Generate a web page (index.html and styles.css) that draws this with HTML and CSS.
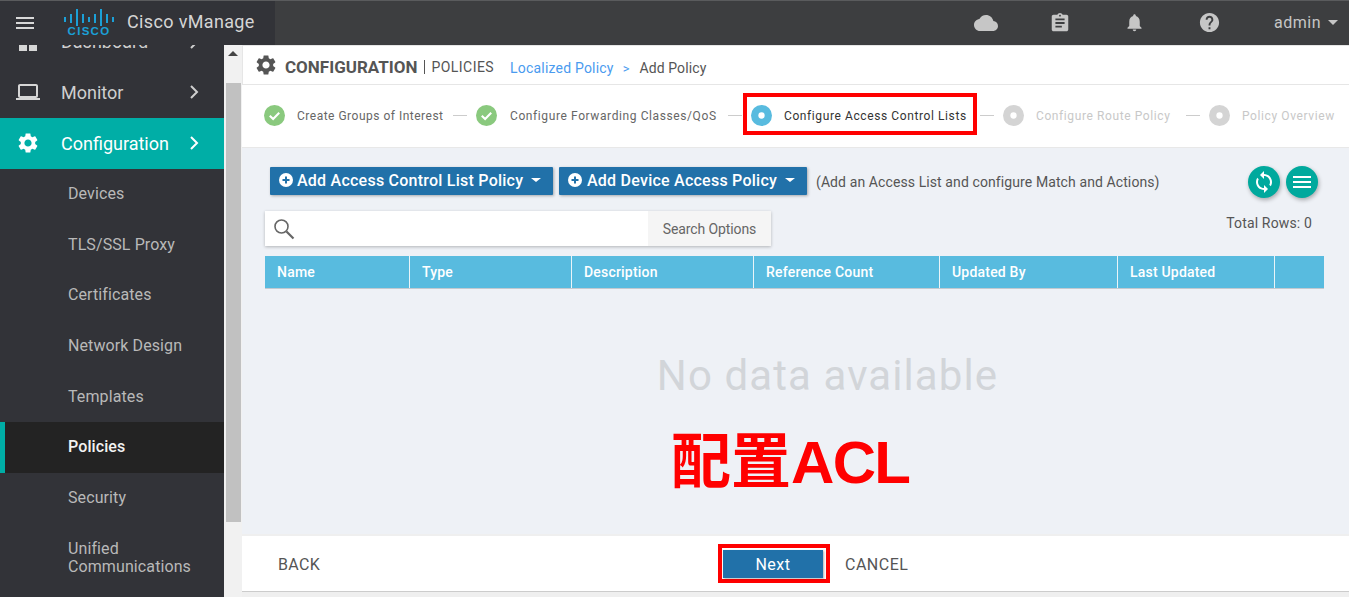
FILE: index.html
```html
<!DOCTYPE html>
<html lang="en">

<head>
    <meta charset="UTF-8">
    <title>Cisco vManage</title>
    <link rel="stylesheet" href="styles.css">
</head>

<body>
    <header class="topbar">
        <div class="brand">
            <svg class="burger" viewBox="0 0 24 24"><path d="M3 18h18v-2H3v2zm0-5h18v-2H3v2zm0-7v2h18V6H3z"/></svg>
            <div class="logo">
                <svg class="logo-bars" viewBox="0 0 50 17">
                    <rect x="0" y="8" width="2" height="5"/>
                    <rect x="6" y="5" width="2" height="9"/>
                    <rect x="12" y="0" width="2" height="17"/>
                    <rect x="18" y="5" width="2" height="9"/>
                    <rect x="24" y="8" width="2" height="5"/>
                    <rect x="30" y="5" width="2" height="9"/>
                    <rect x="36" y="0" width="2" height="17"/>
                    <rect x="42" y="5" width="2" height="9"/>
                    <rect x="48" y="8" width="2" height="5"/>
                </svg>
                <span class="logo-word">CISCO</span>
            </div>
            <span class="brand-name">Cisco vManage</span>
        </div>
        <div class="top-actions">
            <svg class="top-icon icon-cloud" viewBox="0 0 24 24"><path d="M19.35 10.04C18.67 6.59 15.64 4 12 4 9.11 4 6.6 5.64 5.35 8.04 2.34 8.36 0 10.91 0 14c0 3.31 2.69 6 6 6h13c2.76 0 5-2.24 5-5 0-2.64-2.05-4.78-4.65-4.96z"/></svg>
            <svg class="top-icon icon-task" viewBox="0 0 24 24"><path d="M19 3h-4.18C14.4 1.84 13.3 1 12 1c-1.3 0-2.4.84-2.82 2H5c-1.1 0-2 .9-2 2v14c0 1.1.9 2 2 2h14c1.1 0 2-.9 2-2V5c0-1.1-.9-2-2-2zm-7 0c.55 0 1 .45 1 1s-.45 1-1 1-1-.45-1-1 .45-1 1-1zm2 14H7v-2h7v2zm3-4H7v-2h10v2zm0-4H7V7h10v2z"/></svg>
            <svg class="top-icon icon-bell" viewBox="0 0 24 24"><path d="M12 22c1.1 0 2-.9 2-2h-4c0 1.1.89 2 2 2zm6-6v-5c0-3.07-1.64-5.64-4.5-6.32V4c0-.83-.67-1.5-1.5-1.5s-1.5.67-1.5 1.5v.68C7.63 5.36 6 7.92 6 11v5l-2 2v1h16v-1l-2-2z"/></svg>
            <svg class="top-icon icon-help" viewBox="0 0 24 24"><path d="M12 2C6.48 2 2 6.48 2 12s4.48 10 10 10 10-4.48 10-10S17.52 2 12 2zm1 17h-2v-2h2v2zm2.07-7.75l-.9.92C13.45 12.9 13 13.5 13 15h-2v-.5c0-1.1.45-2.1 1.17-2.83l1.24-1.26c.37-.36.59-.86.59-1.41 0-1.1-.9-2-2-2s-2 .9-2 2H8c0-2.21 1.79-4 4-4s4 1.79 4 4c0 .88-.36 1.68-.93 2.25z"/></svg>
            <span class="user">admin</span>
            <span class="user-caret"></span>
        </div>
    </header>

    <div class="layout">
        <nav class="sidebar">
            <a class="nav-item">
                <svg class="nav-icon" viewBox="0 0 24 24"><path d="M3 13h8V3H3v10zm0 8h8v-6H3v6zm10 0h8V11h-8v10zm0-18v6h8V3h-8z"/></svg>
                <span class="nav-label">Dashboard</span>
                <svg class="nav-arrow" viewBox="0 0 10 16"><path d="M2 2l6 6-6 6"/></svg>
            </a>
            <a class="nav-item">
                <svg class="nav-icon" viewBox="0 0 24 24"><path d="M20 18c1.1 0 1.99-.9 1.99-2L22 6c0-1.1-.9-2-2-2H4c-1.1 0-2 .9-2 2v10c0 1.1.9 2 2 2H0v2h24v-2h-4zM4 6h16v10H4V6z"/></svg>
                <span class="nav-label">Monitor</span>
                <svg class="nav-arrow" viewBox="0 0 10 16"><path d="M2 2l6 6-6 6"/></svg>
            </a>
            <a class="nav-item nav-open">
                <svg class="nav-icon" viewBox="0 0 24 24"><path d="M19.14 12.94c.04-.3.06-.61.06-.94 0-.32-.02-.64-.07-.94l2.03-1.58c.18-.14.23-.41.12-.61l-1.92-3.32c-.12-.22-.37-.29-.59-.22l-2.39.96c-.5-.38-1.03-.7-1.62-.94l-.36-2.54c-.04-.24-.24-.41-.48-.41h-3.84c-.24 0-.43.17-.47.41l-.36 2.54c-.59.24-1.13.57-1.62.94l-2.39-.96c-.22-.08-.47 0-.59.22L2.74 8.87c-.12.21-.08.47.12.61l2.03 1.58c-.05.3-.09.63-.09.94s.02.64.07.94l-2.03 1.58c-.18.14-.23.41-.12.61l1.92 3.32c.12.22.37.29.59.22l2.39-.96c.5.38 1.03.7 1.62.94l.36 2.54c.05.24.24.41.48.41h3.84c.24 0 .44-.17.47-.41l.36-2.54c.59-.24 1.13-.56 1.62-.94l2.39.96c.22.08.47 0 .59-.22l1.92-3.32c.12-.22.07-.47-.12-.61l-2.01-1.58zM12 15.6c-1.98 0-3.6-1.62-3.6-3.6s1.62-3.6 3.6-3.6 3.6 1.62 3.6 3.6-1.62 3.6-3.6 3.6z"/></svg>
                <span class="nav-label">Configuration</span>
                <svg class="nav-arrow" viewBox="0 0 10 16"><path d="M2 2l6 6-6 6"/></svg>
            </a>
            <a class="sub-item">Devices</a>
            <a class="sub-item">TLS/SSL Proxy</a>
            <a class="sub-item">Certificates</a>
            <a class="sub-item">Network Design</a>
            <a class="sub-item">Templates</a>
            <a class="sub-item sub-active">Policies</a>
            <a class="sub-item">Security</a>
            <a class="sub-item sub-two">Unified<br>Communications</a>
        </nav>

        <div class="scrollbar">
            <span class="scroll-up"></span>
            <span class="scroll-thumb"></span>
        </div>

        <main class="main">
            <div class="page-head">
                <svg class="head-gear" viewBox="0 0 24 24"><path d="M19.14 12.94c.04-.3.06-.61.06-.94 0-.32-.02-.64-.07-.94l2.03-1.58c.18-.14.23-.41.12-.61l-1.92-3.32c-.12-.22-.37-.29-.59-.22l-2.39.96c-.5-.38-1.03-.7-1.62-.94l-.36-2.54c-.04-.24-.24-.41-.48-.41h-3.84c-.24 0-.43.17-.47.41l-.36 2.54c-.59.24-1.13.57-1.62.94l-2.39-.96c-.22-.08-.47 0-.59.22L2.74 8.87c-.12.21-.08.47.12.61l2.03 1.58c-.05.3-.09.63-.09.94s.02.64.07.94l-2.03 1.58c-.18.14-.23.41-.12.61l1.92 3.32c.12.22.37.29.59.22l2.39-.96c.5.38 1.03.7 1.62.94l.36 2.54c.05.24.24.41.48.41h3.84c.24 0 .44-.17.47-.41l.36-2.54c.59-.24 1.13-.56 1.62-.94l2.39.96c.22.08.47 0 .59-.22l1.92-3.32c.12-.22.07-.47-.12-.61l-2.01-1.58zM12 15.6c-1.98 0-3.6-1.62-3.6-3.6s1.62-3.6 3.6-3.6 3.6 1.62 3.6 3.6-1.62 3.6-3.6 3.6z"/></svg>
                <span class="head-title">CONFIGURATION</span>
                <span class="head-sub">POLICIES</span>
                <a class="crumb-link">Localized Policy</a>
                <span class="crumb-sep">&gt;</span>
                <span class="crumb-here">Add Policy</span>
            </div>

            <div class="steps">
                <div class="step step-done">
                    <svg class="step-icon" viewBox="0 0 20 20"><circle cx="10" cy="10" r="10" fill="#8ac97e"/><path d="M5.5 10.2l3.2 3.2 5.8-6" fill="none" stroke="#fff" stroke-width="2"/></svg>
                    <span class="step-text step-w1">Create Groups of Interest</span>
                </div>
                <span class="step-line"></span>
                <div class="step step-done">
                    <svg class="step-icon" viewBox="0 0 20 20"><circle cx="10" cy="10" r="10" fill="#8ac97e"/><path d="M5.5 10.2l3.2 3.2 5.8-6" fill="none" stroke="#fff" stroke-width="2"/></svg>
                    <span class="step-text step-w2">Configure Forwarding Classes/QoS</span>
                </div>
                <span class="step-line"></span>
                <div class="step step-current">
                    <svg class="step-icon" viewBox="0 0 20 20"><circle cx="10" cy="10" r="10" fill="#58bbdf"/><circle cx="10" cy="10" r="3" fill="#fff"/></svg>
                    <span class="step-text step-w3">Configure Access Control Lists</span>
                </div>
                <span class="step-line"></span>
                <div class="step step-todo">
                    <svg class="step-icon" viewBox="0 0 20 20"><circle cx="10" cy="10" r="10" fill="#d4d4d4"/><circle cx="10" cy="10" r="3" fill="#fff"/></svg>
                    <span class="step-text step-w4">Configure Route Policy</span>
                </div>
                <span class="step-line"></span>
                <div class="step step-todo">
                    <svg class="step-icon" viewBox="0 0 20 20"><circle cx="10" cy="10" r="10" fill="#d4d4d4"/><circle cx="10" cy="10" r="3" fill="#fff"/></svg>
                    <span class="step-text step-w5">Policy Overview</span>
                </div>
            </div>

            <section class="content">
                <div class="toolbar">
                    <button class="add-btn add-acl">
                        <svg class="plus" viewBox="0 0 14 14"><circle cx="7" cy="7" r="7" fill="#fff"/><path d="M7 3.5v7M3.5 7h7" stroke="#2171a9" stroke-width="2"/></svg>
                        <span>Add Access Control List Policy</span>
                        <i class="caret"></i>
                    </button>
                    <button class="add-btn add-dev">
                        <svg class="plus" viewBox="0 0 14 14"><circle cx="7" cy="7" r="7" fill="#fff"/><path d="M7 3.5v7M3.5 7h7" stroke="#2171a9" stroke-width="2"/></svg>
                        <span>Add Device Access Policy</span>
                        <i class="caret"></i>
                    </button>
                    <span class="hint">(Add an Access List and configure Match and Actions)</span>
                    <div class="round-btns">
                        <button class="round-btn">
                            <svg viewBox="0 0 24 24"><path d="M12 4V1L8 5l4 4V6c3.31 0 6 2.69 6 6 0 1.01-.25 1.97-.7 2.8l1.46 1.46C19.54 15.03 20 13.57 20 12c0-4.42-3.58-8-8-8zm0 14c-3.31 0-6-2.69-6-6 0-1.01.25-1.97.7-2.8L5.24 7.74C4.46 8.97 4 10.43 4 12c0 4.42 3.58 8 8 8v3l4-4-4-4v3z"/></svg>
                        </button>
                        <button class="round-btn">
                            <svg viewBox="0 0 24 24"><path d="M3 18h18v-2H3v2zm0-5h18v-2H3v2zm0-7v2h18V6H3z"/></svg>
                        </button>
                    </div>
                </div>

                <div class="search-row">
                    <div class="search-box">
                        <svg class="search-icon" viewBox="0 0 22 22"><circle cx="8.5" cy="8.5" r="6.5" fill="none" stroke="#666" stroke-width="1.6"/><path d="M13.5 13.5l7 7" stroke="#666" stroke-width="2.2"/></svg>
                        <span class="search-opt">Search Options</span>
                    </div>
                    <span class="total">Total Rows: 0</span>
                </div>

                <div class="table-head">
                    <div class="col col-name">Name</div>
                    <div class="col col-type">Type</div>
                    <div class="col col-desc">Description</div>
                    <div class="col col-ref">Reference Count</div>
                    <div class="col col-by">Updated By</div>
                    <div class="col col-last">Last Updated</div>
                    <div class="col col-end"></div>
                </div>

                <div class="no-data">No data available</div>
                <div class="note" lang="zh-CN">配置<span class="note-latin">ACL</span></div>
            </section>

            <div class="footer">
                <a class="foot-link foot-back">BACK</a>
                <div class="next-mark"><button class="next-btn">Next</button></div>
                <a class="foot-link foot-cancel">CANCEL</a>
            </div>
        </main>
    </div>
</body>

</html>
```

FILE: styles.css
```css
* {
    box-sizing: border-box;
}

html,
body {
    height: 597px;
    margin: 0;
    overflow: hidden;
}

body {
    font-family: Roboto, "Liberation Sans", sans-serif;
    background-color: #efefef;
    color: #555;
}

/* top bar */
.topbar {
    display: flex;
    justify-content: space-between;
    height: 45px;
    background-color: #3d3e40;
    border-top: 1px solid #5a5b5d;
}

.brand {
    display: flex;
    align-items: center;
    width: 275px;
    background-color: #323338;
}

.burger {
    width: 24px;
    height: 24px;
    margin-left: 13px;
    fill: #d8d8d8;
}

.logo {
    display: flex;
    flex-direction: column;
    align-items: center;
    width: 50px;
    margin-left: 27px;
    margin-top: -1px;
}

.logo-bars {
    display: block;
    width: 50px;
    height: 17px;
    fill: #1ba0d7;
}

.logo-word {
    margin-top: 1px;
    font-family: "Liberation Sans", sans-serif;
    font-size: 11.5px;
    font-weight: 700;
    line-height: 9px;
    letter-spacing: 1.3px;
    color: #1ba0d7;
}

.brand-name {
    margin-left: 13px;
    margin-top: -3px;
    font-size: 18px;
    color: #d5d5d5;
    letter-spacing: 0.35px;
}

.top-actions {
    display: flex;
    align-items: center;
    padding-right: 11px;
    padding-bottom: 1px;
}

.top-icon {
    fill: #c6c6c6;
}

.icon-cloud {
    width: 24px;
    height: 24px;
}

.icon-task {
    width: 22px;
    height: 22px;
    margin-left: 51px;
}

.icon-bell {
    width: 21px;
    height: 21px;
    margin-left: 53px;
}

.icon-help {
    width: 23px;
    height: 23px;
    margin-left: 53px;
}

.user {
    margin-left: 53px;
    font-size: 16px;
    letter-spacing: 0.5px;
    color: #c6c6c6;
}

.user-caret {
    margin-left: 7px;
    border-left: 5px solid transparent;
    border-right: 5px solid transparent;
    border-top: 5px solid #c6c6c6;
}

/* page below the top bar */
.layout {
    display: flex;
    height: 552px;
}

.sidebar {
    flex: 0 0 224px;
    overflow: hidden;
    background-color: #323338;
}

.nav-item {
    display: flex;
    align-items: center;
    height: 50.5px;
    color: #cfcfcf;
    font-size: 18px;
}

.nav-item:first-child {
    margin-top: -28.5px;
}

.nav-icon {
    flex: none;
    width: 24px;
    height: 24px;
    margin-left: 16px;
    fill: #d6d6d6;
}

.nav-label {
    flex: 1;
    margin-left: 21px;
}

.nav-arrow {
    flex: none;
    width: 10px;
    height: 16px;
    margin-right: 25px;
    fill: none;
    stroke: #cfcfcf;
    stroke-width: 2;
}

.nav-open {
    height: 51px;
    background-color: #00aea6;
    color: #fff;
}

.nav-open .nav-icon {
    fill: #fff;
}

.nav-open .nav-arrow {
    stroke: #fff;
}

.sub-item {
    display: flex;
    align-items: center;
    height: 50.7px;
    padding-left: 68px;
    font-size: 16px;
    line-height: 18px;
    letter-spacing: 0.1px;
    color: #b9b9b9;
}

.sub-active {
    background-color: #232323;
    border-left: 5px solid #00aea6;
    padding-left: 63px;
    font-weight: 500;
    color: #f2f2f2;
}

.sub-two {
    height: 70px;
}

.scrollbar {
    flex: 0 0 18px;
    display: flex;
    flex-direction: column;
    align-items: center;
    background-color: #f1f1f1;
}

.scroll-up {
    margin-top: 6px;
    border-left: 5px solid transparent;
    border-right: 5px solid transparent;
    border-bottom: 5px solid #444;
}

.scroll-thumb {
    width: 15px;
    height: 439px;
    margin-top: 27px;
    background-color: #c1c1c1;
}

.main {
    flex: 1;
    display: flex;
    flex-direction: column;
    min-width: 0;
}

/* heading */
.page-head {
    display: flex;
    align-items: center;
    height: 40px;
    padding-left: 11px;
    background-color: #fff;
    border: 1px solid #e6e6e6;
    border-right: 0;
}

.head-gear {
    width: 24px;
    height: 24px;
    fill: #555;
}

.head-title {
    margin-left: 7px;
    margin-top: 3px;
    font-size: 17px;
    font-weight: 700;
    color: #555;
}

.head-sub {
    margin-left: 7px;
    margin-top: 3px;
    padding-left: 6px;
    border-left: 1px solid #555;
    font-size: 14px;
    line-height: 14px;
    letter-spacing: 0.45px;
    color: #555;
}

.crumb-link {
    margin-left: 16px;
    margin-top: 6px;
    font-size: 14px;
    letter-spacing: 0.2px;
    color: #4a9bef;
}

.crumb-sep {
    margin-left: 9px;
    margin-top: 6px;
    font-size: 13px;
    color: #4a9bef;
}

.crumb-here {
    margin-left: 10px;
    margin-top: 6px;
    font-size: 14px;
    letter-spacing: 0.1px;
    color: #555;
}

/* wizard steps */
.steps {
    display: flex;
    align-items: center;
    height: 63px;
    padding-left: 22px;
    padding-bottom: 1px;
    background-color: #fff;
    border-bottom: 1px solid #e8e8e8;
}

.step {
    display: flex;
    align-items: center;
    flex: none;
}

.step-icon {
    width: 21px;
    height: 21px;
    flex: none;
}

.step-text {
    margin-left: 12px;
    font-size: 12px;
    letter-spacing: 0.6px;
    white-space: nowrap;
    color: #666;
}

.step-w1 {
    width: 146px;
    letter-spacing: 0.5px;
}

.step-w2 {
    width: 208px;
    margin-left: 13px;
}

.step-w3 {
    width: 186px;
    color: #333;
}

.step-w4 {
    width: 140px;
}

.step-w5 {
    width: 95px;
}

.step-todo .step-text {
    color: #c8c8c8;
}

.step-line {
    flex: none;
    width: 14px;
    height: 1px;
    margin: 0 9px 0 10px;
    background-color: #ccc;
}

.step-current {
    position: relative;
}

/* red mark drawn over the current step */
.step-current::after {
    content: "";
    position: absolute;
    left: -8px;
    top: -12px;
    box-sizing: border-box;
    width: 234px;
    height: 42px;
    border: 4px solid #f00;
}

/* list area */
.content {
    position: relative;
    flex: 1;
    padding: 19px 25px 0 23px;
    background-color: #eef1f6;
}

.toolbar {
    display: flex;
    align-items: center;
    height: 32px;
}

.add-btn {
    display: flex;
    align-items: center;
    height: 28px;
    padding: 0 0 2px 9px;
    border: 0;
    border-radius: 1px;
    background-color: #2171a9;
    box-shadow: 1px 1px 3px rgba(0, 0, 0, 0.3);
    font-family: inherit;
    font-size: 16px;
    font-weight: 500;
    letter-spacing: 0.24px;
    color: #fff;
    margin-top: -4px;
}

.add-acl {
    width: 283px;
    margin-left: 5px;
}

.add-dev {
    width: 248px;
    margin-left: 6px;
}

.plus {
    width: 14px;
    height: 14px;
    margin-right: 4px;
    flex: none;
}

.add-dev .plus {
    margin-right: 5px;
}

.caret {
    margin-left: 8px;
    border-left: 5px solid transparent;
    border-right: 5px solid transparent;
    border-top: 4px solid #fff;
}

.hint {
    margin-left: 9px;
    margin-top: -2px;
    font-size: 14px;
    letter-spacing: 0.1px;
    color: #555;
}

.round-btns {
    display: flex;
    gap: 6px;
    margin-left: auto;
    margin-right: 6px;
    margin-top: -2px;
}

.round-btn {
    display: flex;
    align-items: center;
    justify-content: center;
    width: 32px;
    height: 32px;
    padding: 0;
    border: 0;
    border-radius: 50%;
    background-color: #00a99d;
    box-shadow: 1px 2px 4px rgba(0, 0, 0, 0.3);
}

.round-btn svg {
    width: 24px;
    height: 24px;
    fill: #fff;
}

.search-row {
    display: flex;
    justify-content: space-between;
    margin-top: 12px;
}

.search-box {
    display: flex;
    align-items: center;
    justify-content: space-between;
    width: 506px;
    height: 35px;
    background-color: #fff;
    box-shadow: 0 1px 3px rgba(0, 0, 0, 0.25);
}

.search-icon {
    width: 22px;
    height: 22px;
    margin-left: 8px;
}

.search-opt {
    display: flex;
    align-items: center;
    justify-content: center;
    width: 123px;
    height: 35px;
    background-color: #f5f5f5;
    font-size: 14px;
    letter-spacing: -0.1px;
    color: #666;
}

.total {
    margin-right: 12px;
    margin-top: 4px;
    font-size: 14px;
    letter-spacing: 0.15px;
    color: #555;
}

.table-head {
    display: flex;
    height: 33px;
    margin-top: 10px;
    border-bottom: 1px solid #c2c9d0;
}

.col {
    display: flex;
    align-items: center;
    padding-left: 12px;
    background-color: #58bbdf;
    border-right: 1px solid #eaf4f8;
    font-size: 14px;
    font-weight: 500;
    letter-spacing: 0.2px;
    color: #fff;
}

.col-name {
    width: 145px;
}

.col-type {
    width: 162px;
}

.col-desc {
    width: 182px;
}

.col-ref {
    width: 186px;
}

.col-by {
    width: 178px;
}

.col-last {
    width: 157px;
}

.col-end {
    flex: 1;
    border-right: 0;
}

.no-data {
    margin-top: 60px;
    padding-left: 66px;
    text-align: center;
    font-size: 42px;
    line-height: 54px;
    letter-spacing: 1.1px;
    color: #d2d5d9;
}

/* big red note laid over the list */
.note {
    position: absolute;
    left: 429px;
    top: 274px;
    font-family: "Noto Sans CJK SC", "Liberation Sans", sans-serif;
    font-size: 60px;
    font-weight: 700;
    line-height: 70px;
    color: #f00;
    white-space: nowrap;
}

.note-latin {
    font-family: "Liberation Sans", sans-serif;
    letter-spacing: -1.7px;
}

/* bottom buttons */
.footer {
    display: flex;
    align-items: center;
    height: 56px;
    margin-top: 2px;
    margin-bottom: 5px;
    background-color: #fff;
    border-bottom: 1px solid #ccc;
}

.foot-link {
    margin-top: 2px;
    font-size: 16px;
    color: #555;
}

.foot-back {
    margin-left: 36px;
    letter-spacing: 0.3px;
}

.next-mark {
    display: flex;
    margin-left: 398px;
    padding: 2px 3px 1px 1px;
    border: 4px solid #f00;
    background-color: #fff;
}

.next-btn {
    width: 100px;
    height: 28px;
    border: 0;
    background-color: #2171a9;
    box-shadow: 1px 1px 2px rgba(0, 0, 0, 0.3);
    font-family: inherit;
    font-size: 16px;
    letter-spacing: 0.5px;
    color: #fff;
}

.foot-cancel {
    margin-left: 15px;
    letter-spacing: 0.5px;
}
```
